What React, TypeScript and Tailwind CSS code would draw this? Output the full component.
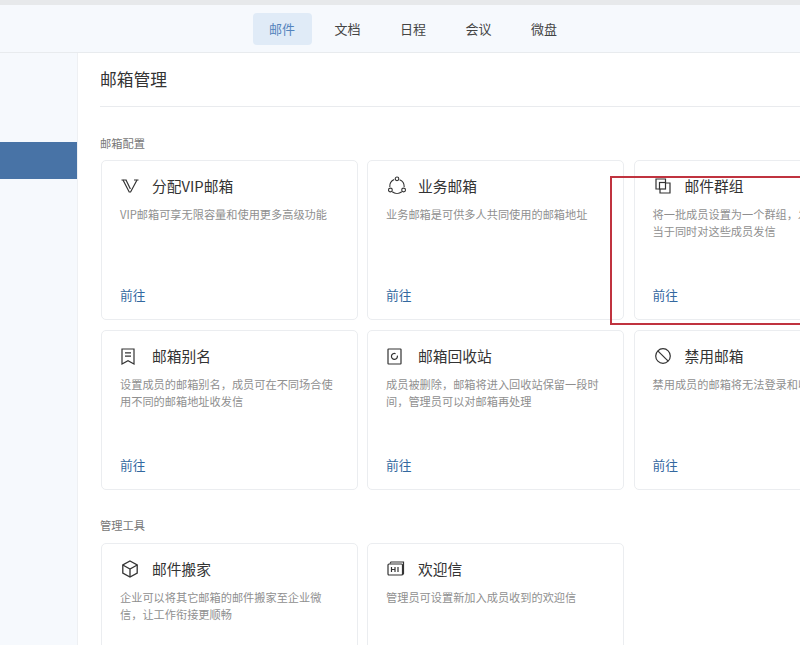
import React from "react";

const font = { fontFamily: '"Noto Sans CJK SC", "Noto Sans", sans-serif' };

const VIcon = () => (
  <svg width="18" height="16" viewBox="0 0 18 16" fill="none" stroke="#333" strokeWidth="1.2">
    <path d="M0.5 2h5M13 2h4.5" />
    <path d="M2 2l6.2 12h1.4L16 2" />
    <path d="M5 2l4.4 9" />
  </svg>
);
const OrbitIcon = () => (
  <svg width="20" height="20" viewBox="0 0 20 20" fill="none" stroke="#333" strokeWidth="1.1">
    <path d="M7.2 3.6A7.4 7.4 0 0 0 2.8 11" />
    <path d="M12.6 3.8A7.4 7.4 0 0 1 17.2 11" />
    <path d="M5.2 15.8a7.6 7.6 0 0 0 9.6 0" />
    <circle cx="10" cy="2.8" r="1.8" />
    <circle cx="3.4" cy="14" r="1.9" />
    <circle cx="16.6" cy="14" r="1.9" />
  </svg>
);
const GroupIcon = () => (
  <svg width="18" height="18" viewBox="0 0 18 18" fill="none" stroke="#333" strokeWidth="1.2">
    <path d="M11.5 5.5V2H2v10h3.5" />
    <rect x="5.5" y="5.5" width="6" height="6.5" />
    <path d="M11.5 6H16v10H6v-4" />
  </svg>
);
const AliasIcon = () => (
  <svg width="14" height="17" viewBox="0 0 14 17" fill="none" stroke="#333" strokeWidth="1.2">
    <path d="M1 1h12v15L7 12.8 1 16z" />
    <path d="M4 4.8h6M4 8.2h6" />
  </svg>
);
const BinIcon = () => (
  <svg width="15" height="17" viewBox="0 0 15 17" fill="none" stroke="#333" strokeWidth="1.2">
    <rect x="1" y="1" width="13" height="15" rx="0.5" />
    <path d="M10.3 7.6A3 3 0 1 1 8.6 5.7" />
  </svg>
);
const BanIcon = () => (
  <svg width="18" height="18" viewBox="0 0 18 18" fill="none" stroke="#333" strokeWidth="1.2">
    <circle cx="9" cy="9" r="7.3" />
    <path d="M3.8 3.8 14.2 14.2" />
  </svg>
);
const BoxIcon = () => (
  <svg width="18" height="18" viewBox="0 0 18 18" fill="none" stroke="#333" strokeWidth="1.3">
    <path d="M9 1 16.2 5v8L9 17l-7.2-4V5z" />
    <path d="M1.8 5 9 9l7.2-4M9 9v8" />
  </svg>
);
const HiIcon = () => (
  <svg width="18" height="16" viewBox="0 0 18 16" fill="none" stroke="#333" strokeWidth="1.2">
    <path d="M3 2.5 4 1h12.5v11.5L15.5 14" />
    <rect x="1" y="3" width="14.5" height="11" rx="1" />
    <path d="M4.5 6v5M8 6v5M4.5 8.5H8M11 6v5" />
  </svg>
);

type CardData = { icon: React.ReactNode; title: string; desc: string; go?: boolean };

const row1: CardData[] = [
  { icon: <VIcon />, title: "分配VIP邮箱", desc: "VIP邮箱可享无限容量和使用更多高级功能", go: true },
  { icon: <OrbitIcon />, title: "业务邮箱", desc: "业务邮箱是可供多人共同使用的邮箱地址", go: true },
  { icon: <GroupIcon />, title: "邮件群组", desc: "将一批成员设置为一个群组，发信给群组相当于同时对这些成员发信", go: true },
  { icon: <AliasIcon />, title: "邮箱别名", desc: "设置成员的邮箱别名，成员可在不同场合使用不同的邮箱地址收发信", go: true },
  { icon: <BinIcon />, title: "邮箱回收站", desc: "成员被删除，邮箱将进入回收站保留一段时间，管理员可以对邮箱再处理", go: true },
  { icon: <BanIcon />, title: "禁用邮箱", desc: "禁用成员的邮箱将无法登录和收发邮件", go: true },
];
const row2: CardData[] = [
  { icon: <BoxIcon />, title: "邮件搬家", desc: "企业可以将其它邮箱的邮件搬家至企业微信，让工作衔接更顺畅" },
  { icon: <HiIcon />, title: "欢迎信", desc: "管理员可设置新加入成员收到的欢迎信" },
];

function Card({ icon, title, desc, go }: CardData) {
  return (
    <div className="relative h-[160px] w-full rounded-[5px] border border-[#ebedf0] bg-white pl-[18px] pr-[20px] pt-[14px]">
      <div className="flex h-[22px] items-center">
        <span className="flex w-[32px] shrink-0 items-center pl-px">{icon}</span>
        <span className="whitespace-nowrap text-[14.75px] leading-[22px] text-[#333]">{title}</span>
      </div>
      <p className="mt-[9px] text-[11.2px] leading-[17px] text-[#8f8f8f]">{desc}</p>
      {go && <a className="absolute bottom-[15px] left-[18px] text-[12.75px] leading-[18px] text-[#33689f]">前往</a>}
    </div>
  );
}

const navItems = ["邮件", "文档", "日程", "会议", "微盘"];

export default function App() {
  return (
    <div style={font} className="relative flex h-[645px] w-[800px] flex-col overflow-hidden bg-white">
      <div className="h-[5px] shrink-0 bg-[#e7e9eb]" />
      <header className="flex h-[48px] shrink-0 items-center justify-center gap-[6.5px] border-b border-[#e8ebee] bg-[#f6f9fd] pl-[26px]">
        {navItems.map((n, i) => (
          <div
            key={n}
            className={
              "flex h-[32px] w-[59px] items-center justify-center rounded-[4px] text-[13px] " +
              (i === 0 ? "bg-[#e0ebf7] text-[#5584bd]" : "text-[#444]")
            }
          >
            {n}
          </div>
        ))}
      </header>
      <div className="flex min-h-0 flex-1">
        <aside className="w-[78px] shrink-0 border-r border-[#eef0f3] bg-[#f6f9fd] pt-[89px]">
          <div className="h-[37px] bg-[#4873a6]" />
        </aside>
        <main className="min-w-0 flex-1 pl-[22px]">
          <div className="flex h-[54px] w-[760px] items-center border-b border-[#e9ebee] text-[16.75px] text-[#333]">
            邮箱管理
          </div>
          <div className="mt-[28px] text-[11.25px] leading-[16px] text-[#777]">邮箱配置</div>
          <div className="ml-px mt-[9px] grid w-[790px] grid-cols-[256.5px_257px_256.5px] gap-x-[9.5px] gap-y-[10px]">
            {row1.map((c) => (
              <Card key={c.title} {...c} />
            ))}
          </div>
          <div className="mt-[27px] text-[11.25px] leading-[16px] text-[#777]">管理工具</div>
          <div className="ml-px mt-[10px] grid w-[790px] grid-cols-[256.5px_257px_256.5px] gap-x-[9.5px]">
            {row2.map((c) => (
              <Card key={c.title} {...c} />
            ))}
          </div>
        </main>
      </div>
      <div className="absolute left-[610px] top-[176px] h-[149px] w-[200px] border-2 border-[#c0333f]" />
    </div>
  );
}
